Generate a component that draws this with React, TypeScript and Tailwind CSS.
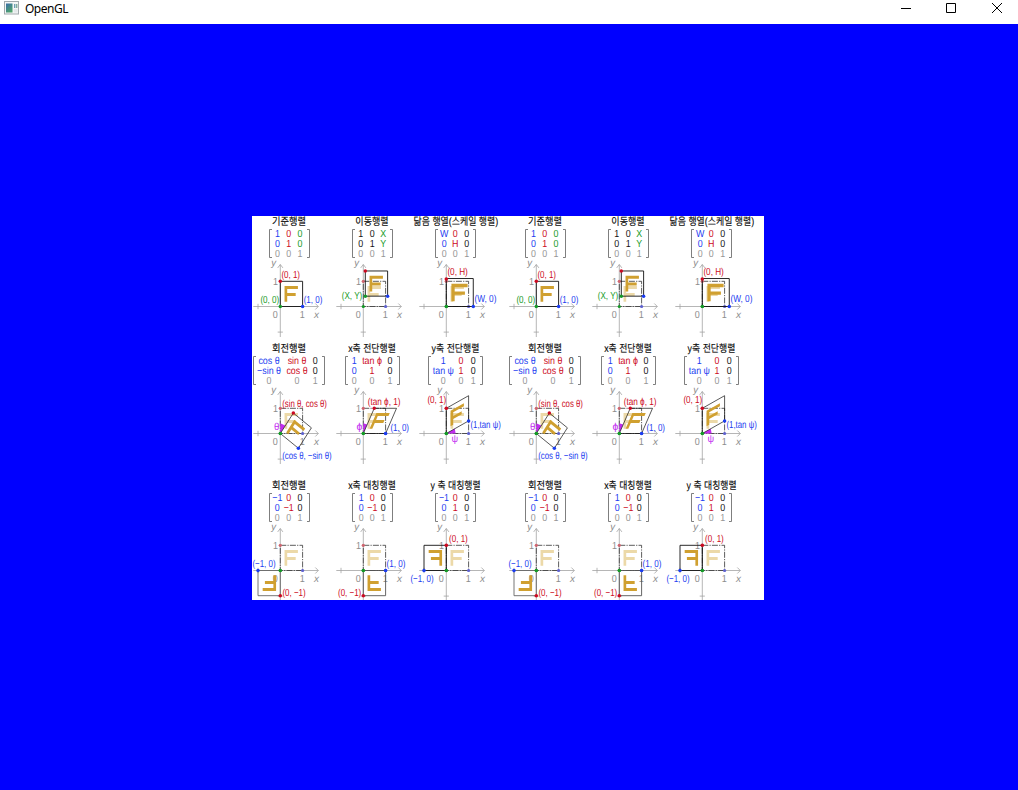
import React from "react";

const RED = "#cc0a22";
const BLUE = "#1a3cf0";
const GREEN = "#149a26";
const BLACK = "#111111";
const GRAY = "#959595";
const PURPLE = "#c22cf0";
const GOLD = "#d0a030";

const UX = 22.3;
const UY = 25.2;

type Mat = [number, number, number, number, number, number];
type Cell = [string, string];
type Label = { t: string; x: number; y: number; w: number; c: string };

type Figure = {
  ox: number;
  oy: number;
  title: string;
  tx: number;
  tw: number;
  ty: number;
  bracket: [number, number];
  cols: [number, number, number];
  cells: Cell[][];
  m: Mat;
  edge?: string;
  ghost: boolean;
  labels: Label[];
  dots: [number, number, string][];
  wedge?: [number, number, number, number];
};

const bottom: Cell[] = [["0", GRAY], ["0", GRAY], ["1", GRAY]];
const C1 = 28.3;
const C2 = 111.3;
const C3 = 194.3;
const R1 = 90.5;
const R2 = 217.5;
const R3 = 354.5;

const figures: Figure[] = [
  {
    ox: C1, oy: R1, title: "기준행렬", tx: 20, tw: 34, ty: 9,
    bracket: [17.5, 57.5], cols: [25.5, 36.7, 48],
    cells: [[["1", BLUE], ["0", RED], ["0", GREEN]], [["0", BLUE], ["1", RED], ["0", GREEN]], bottom],
    m: [1, 0, 0, 1, 0, 0], ghost: false,
    labels: [
      { t: "(0, 1)", x: 29.4, y: 62, w: 18.6, c: RED },
      { t: "(0, 0)", x: 8.4, y: 87.2, w: 18.8, c: GREEN },
      { t: "(1, 0)", x: 51.7, y: 87.2, w: 18.6, c: BLUE },
    ],
    dots: [[0, 1, RED], [1, 0, BLUE], [0, 0, GREEN]],
  },
  {
    ox: C2, oy: R1, title: "이동행렬", tx: 103.3, tw: 33.4, ty: 9,
    bracket: [100.5, 140.5], cols: [108.7, 120.3, 131.3],
    cells: [[["1", BLACK], ["0", BLACK], ["X", GREEN]], [["0", BLACK], ["1", BLACK], ["Y", GREEN]], bottom],
    m: [1, 0, 0, 1, 0.09, 0.41], ghost: true,
    labels: [{ t: "(X, Y)", x: 89.8, y: 83.2, w: 20.4, c: GREEN }],
    dots: [[0.09, 1.41, RED], [1.09, 0.41, BLUE], [0.09, 0.41, GREEN]],
  },
  {
    ox: C3, oy: R1, title: "닮음 행열(스케일 행렬)", tx: 161.5, tw: 84.7, ty: 9,
    bracket: [183.5, 223.5], cols: [192.3, 203.3, 214.7],
    cells: [[["W", BLUE], ["0", RED], ["0", BLACK]], [["0", BLUE], ["H", RED], ["0", BLACK]], bottom],
    m: [1.21, 0, 0, 1.11, 0, 0], ghost: true,
    labels: [
      { t: "(0, H)", x: 195.4, y: 59.3, w: 20.4, c: RED },
      { t: "(W, 0)", x: 222.4, y: 86.1, w: 22, c: BLUE },
    ],
    dots: [[0, 1.09, RED], [1.21, 0, BLUE], [0, 0, GREEN]],
  },
  {
    ox: C1, oy: R2, title: "회전행렬", tx: 20, tw: 34, ty: 136,
    bracket: [1.5, 72.5], cols: [17, 45, 63.3],
    cells: [[["cos θ", BLUE], ["sin θ", RED], ["0", BLACK]], [["−sin θ", BLUE], ["cos θ", RED], ["0", BLACK]], bottom],
    m: [0.81, -0.585, 0.585, 0.81, 0, 0], ghost: true,
    labels: [
      { t: "(sin θ, cos θ)", x: 30.2, y: 190.7, w: 44.8, c: RED },
      { t: "(cos θ, −sin θ)", x: 30.2, y: 242.8, w: 49.4, c: BLUE },
      { t: "θ", x: 22, y: 213.8, w: 5.4, c: PURPLE },
    ],
    dots: [[0.585, 0.81, RED], [0.81, -0.585, BLUE], [0, 0, GREEN]],
    wedge: [0, 0.41, 0.22, 0.32],
  },
  {
    ox: C2, oy: R2, title: "x축 전단행렬", tx: 96.2, tw: 47.6, ty: 136,
    bracket: [93.5, 147.5], cols: [102.3, 120, 138],
    cells: [[["1", BLUE], ["tan ϕ", RED], ["0", BLACK]], [["0", BLUE], ["1", RED], ["0", BLACK]], bottom],
    m: [1, 0, 0.49, 1, 0, 0], ghost: true,
    labels: [
      { t: "(tan ϕ, 1)", x: 115.7, y: 188.6, w: 32.8, c: RED },
      { t: "(1, 0)", x: 138.4, y: 215.3, w: 18.6, c: BLUE },
      { t: "ϕ", x: 104.4, y: 213.6, w: 5.8, c: PURPLE },
    ],
    dots: [[0.49, 1, RED], [1, 0, BLUE], [0, 0, GREEN]],
    wedge: [0, 0.41, 0.17, 0.36],
  },
  {
    ox: C3, oy: R2, title: "y축 전단행렬", tx: 179.6, tw: 47.8, ty: 136,
    bracket: [176.5, 230.5], cols: [191.3, 209, 221.3],
    cells: [[["1", BLUE], ["0", RED], ["0", BLACK]], [["tan ψ", BLUE], ["1", RED], ["0", BLACK]], bottom],
    m: [1, 0.5, 0, 1, 0, 0], ghost: true,
    labels: [
      { t: "(0, 1)", x: 175.4, y: 187.2, w: 18.8, c: RED },
      { t: "(1,tan ψ)", x: 218.5, y: 211.5, w: 30.3, c: BLUE },
      { t: "ψ", x: 199.5, y: 225.7, w: 6.6, c: PURPLE },
    ],
    dots: [[0, 1, RED], [1, 0.5, BLUE], [0, 0, GREEN]],
    wedge: [0.42, 0, 0.38, 0.19],
  },
  {
    ox: C1, oy: R3, title: "회전행렬", tx: 20, tw: 34, ty: 273,
    bracket: [17.5, 57.5], cols: [25.3, 36.7, 48],
    cells: [[["−1", BLUE], ["0", RED], ["0", BLACK]], [["0", BLUE], ["−1", RED], ["0", BLACK]], bottom],
    m: [-1, 0, 0, -1, 0, 0], edge: "#666666", ghost: true,
    labels: [
      { t: "(−1, 0)", x: 0.4, y: 351, w: 23.2, c: BLUE },
      { t: "(0, −1)", x: 30.4, y: 380.3, w: 23.2, c: RED },
    ],
    dots: [[0, -1, RED], [-1, 0, BLUE], [0, 0, GREEN]],
  },
  {
    ox: C2, oy: R3, title: "x축 대칭행렬", tx: 96.2, tw: 47.6, ty: 273,
    bracket: [100.5, 140.5], cols: [109.3, 120.3, 131.3],
    cells: [[["1", BLUE], ["0", RED], ["0", BLACK]], [["0", BLUE], ["−1", RED], ["0", BLACK]], bottom],
    m: [1, 0, 0, -1, 0, 0], edge: "#555555", ghost: true,
    labels: [
      { t: "(1, 0)", x: 134.6, y: 351, w: 18.8, c: BLUE },
      { t: "(0, −1)", x: 86, y: 380.3, w: 23.2, c: RED },
    ],
    dots: [[0, -1, RED], [1, 0, BLUE], [0, 0, GREEN]],
  },
  {
    ox: C3, oy: R3, title: "y 축 대칭행렬", tx: 178.6, tw: 50, ty: 273,
    bracket: [183.5, 223.5], cols: [192, 203.3, 214.7],
    cells: [[["−1", BLUE], ["0", RED], ["0", BLACK]], [["0", BLUE], ["1", RED], ["0", BLACK]], bottom],
    m: [-1, 0, 0, 1, 0, 0], ghost: true,
    labels: [
      { t: "(0, 1)", x: 197, y: 325.5, w: 18.8, c: RED },
      { t: "(−1, 0)", x: 158.4, y: 366.3, w: 23.2, c: BLUE },
    ],
    dots: [[0, 1, RED], [-1, 0, BLUE], [0, 0, GREEN]],
  },
];

function LetterF({ f, m, ghost }: { f: Figure; m: Mat; ghost?: boolean }) {
  const [a, b, c, d, e, g] = m;
  return (
    <path
      d="M.19 .19V.81H.79V.69H.31V.54H.69V.42H.31V.19Z"
      fill={ghost ? "#ecd9a8" : GOLD}
      transform={`translate(${f.ox} ${f.oy}) scale(${UX} ${-UY}) matrix(${a} ${b} ${c} ${d} ${e} ${g})`}
    />
  );
}

function Axes({ f }: { f: Figure }) {
  const { ox, oy } = f;
  return (
    <g stroke="#a3a3a3" strokeWidth="0.8" fill="none">
      <path d={`M${ox - 27} ${oy}H${ox + 38}m-3 -3l3 3l-3 3`} />
      <path d={`M${ox} ${oy + 30.5}V${oy - 42}m-2.6 3.4l2.6 -3.4l2.6 3.4`} />
      <path d={`M${ox - UX} ${oy - 2.7}v5.4M${ox - 2.6} ${oy + 25.6}h5.2`} />
      <g stroke="none" fill="#8c8c8c" fontSize="10.2">
        <text x={ox - 9} y={oy - 40.2} fontStyle="italic" textLength="4.8" lengthAdjust="spacingAndGlyphs">y</text>
        <text x={ox + 33.6} y={oy + 11.3} fontStyle="italic" textLength="5" lengthAdjust="spacingAndGlyphs">x</text>
        <text x={ox - 7.6} y={oy + 11.3} textLength="5" lengthAdjust="spacingAndGlyphs">0</text>
        <text x={ox + 19.4} y={oy + 11.3} textLength="5" lengthAdjust="spacingAndGlyphs">1</text>
        <text x={ox - 7.2} y={oy - 21.8} textLength="5" lengthAdjust="spacingAndGlyphs">1</text>
      </g>
    </g>
  );
}

function Diagram({ f }: { f: Figure }) {
  const [a, b, c, d, e, g] = f.m;
  const at = (u: number, v: number) =>
    `${(f.ox + UX * (a * u + c * v + e)).toFixed(2)},${(f.oy - UY * (b * u + d * v + g)).toFixed(2)}`;
  const [l, r] = f.bracket;
  const top = f.ty + 4.5;
  const base = f.ty + 12.1;
  return (
    <g>
      <text x={f.tx} y={f.ty - 0.1} fontSize="10.6" fill="#080808" stroke="#080808" strokeWidth="0.12" textLength={f.tw} lengthAdjust="spacingAndGlyphs">{f.title}</text>
      <path
        d={`M${l + 2.5} ${top}H${l}V${top + 28}H${l + 2.5}M${r - 2.5} ${top}H${r}V${top + 28}H${r - 2.5}`}
        fill="none" stroke="#707070" strokeWidth="0.9"
      />
      {f.cells.map((row, i) =>
        row.map(([t, color], j) => (
          <text
            key={`${i}-${j}`} fontSize="10.2" fill={color} textAnchor="middle"
            transform={`translate(${f.cols[j]} ${base + i * 10.05}) scale(.87 1)`}
          >
            {t}
          </text>
        )),
      )}
      <Axes f={f} />
      {f.ghost && (
        <>
          <LetterF f={f} m={[1, 0, 0, 1, 0, 0]} ghost />
          <rect x={f.ox} y={f.oy - UY} width={UX} height={UY} fill="none" stroke="#333333" strokeWidth="0.8" strokeDasharray="6 1.2 1.2 1.2" />
          <circle cx={f.ox} cy={f.oy - UY} r="1.6" fill="#cf6570" />
          <circle cx={f.ox + UX} cy={f.oy} r="1.6" fill="#5f62d0" />
        </>
      )}
      {f.wedge && (
        <path
          d={`M${f.ox} ${f.oy}L${f.ox + f.wedge[0] * UX} ${f.oy - f.wedge[1] * UY}L${f.ox + f.wedge[2] * UX} ${f.oy - f.wedge[3] * UY}Z`}
          fill={PURPLE}
        />
      )}
      <LetterF f={f} m={f.m} />
      <polygon
        points={`${at(0, 0)} ${at(1, 0)} ${at(1, 1)} ${at(0, 1)}`}
        fill="none" stroke={f.edge ?? "#111111"} strokeWidth={f.wedge ? 0.7 : 0.9}
      />
      {f.ghost && <circle cx={f.ox} cy={f.oy} r="1.6" fill={GREEN} />}
      {f.dots.map(([u, v, color]) => (
        <circle key={`${u},${v}`} cx={f.ox + u * UX} cy={f.oy - v * UY} r="1.75" fill={color} />
      ))}
      {f.labels.map((s) => (
        <text key={s.t} x={s.x} y={s.y} fontSize="10.2" fill={s.c} textLength={s.w} lengthAdjust="spacingAndGlyphs">{s.t}</text>
      ))}
    </g>
  );
}

function Texture() {
  return (
    <svg
      width="256" height="384" viewBox="0 0 256 384" textRendering="geometricPrecision"
      className="block shrink-0 overflow-hidden bg-white font-['Liberation_Sans','Noto_Sans_CJK_KR',sans-serif]"
    >
      {figures.map((f, i) => (
        <Diagram key={i} f={f} />
      ))}
    </svg>
  );
}

function AppIcon() {
  return (
    <svg width="16" height="14" viewBox="0 0 16 14" className="block">
      <defs>
        <linearGradient id="pane" x1="0" y1="0" x2="0.6" y2="1">
          <stop offset="0" stopColor="#3a6ea8" />
          <stop offset="1" stopColor="#4fa36c" />
        </linearGradient>
      </defs>
      <rect x="0.5" y="0.5" width="14" height="12.5" fill="#f4f6f6" stroke="#a2aaad" />
      <rect x="2" y="2.5" width="6.5" height="9" fill="url(#pane)" />
      <rect x="10" y="3" width="1.4" height="4" fill="#6f9fb4" />
      <rect x="12" y="3" width="1.4" height="4" fill="#7fae9c" />
      <rect x="9.8" y="8" width="3.8" height="3.5" fill="#e4e8ea" />
    </svg>
  );
}

export default function App() {
  return (
    <div className="flex h-[790px] w-[1018px] flex-col overflow-hidden bg-[#0000ff]">
      <header className="flex h-6 shrink-0 items-start justify-between bg-white">
        <div className="flex pl-1 pt-px">
          <AppIcon />
          <span className="ml-[5px] font-['Noto_Sans',sans-serif] text-[12px] leading-[15px] tracking-[-0.5px] text-black">OpenGL</span>
        </div>
        <div className="flex gap-[35px] pr-[15px] pt-[3px]">
          <svg width="10" height="11" viewBox="0 0 10 11" stroke="#000" fill="none"><path d="M0 5.5H10" /></svg>
          <svg width="10" height="11" viewBox="0 0 10 11" stroke="#000" fill="none"><path d="M.5 .5H9.5V9.5H.5Z" /></svg>
          <svg width="11" height="11" viewBox="0 0 11 11" stroke="#000" fill="none" className="ml-px"><path d="M0 0L10 10M10 0L0 10" /></svg>
        </div>
      </header>
      <main className="flex flex-1 items-start pl-[252px] pt-48">
        <Texture />
        <Texture />
      </main>
    </div>
  );
}
